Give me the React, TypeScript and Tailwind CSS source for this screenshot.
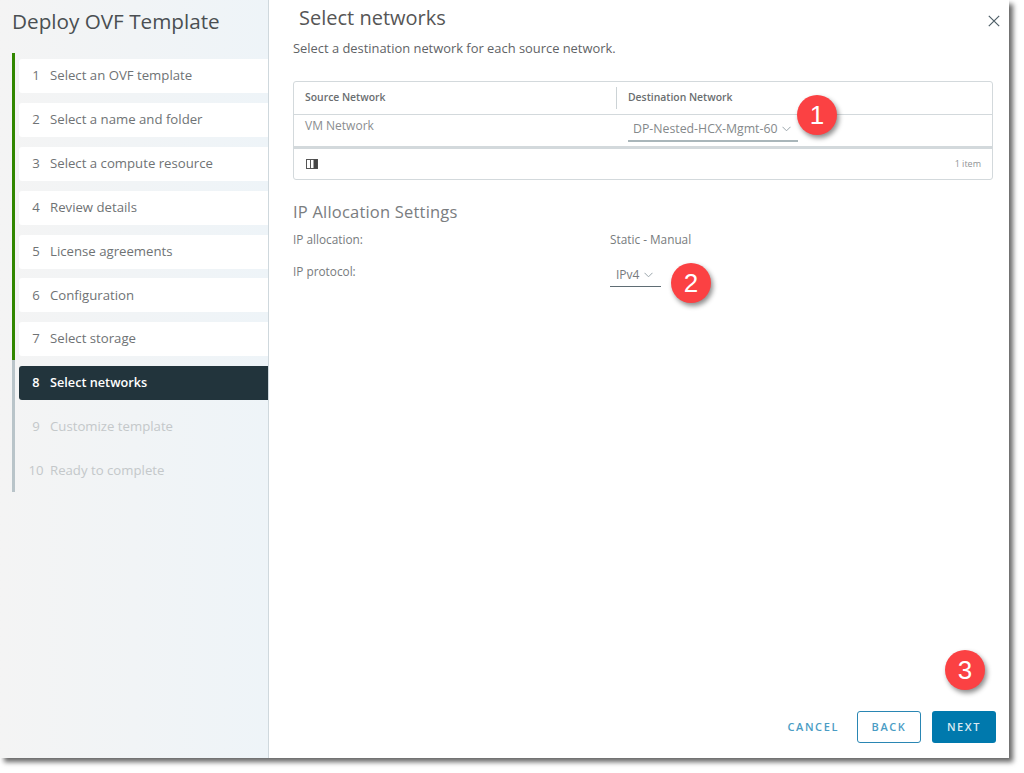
const steps = [
  { n: 1, label: "Select an OVF template", state: "done" },
  { n: 2, label: "Select a name and folder", state: "done" },
  { n: 3, label: "Select a compute resource", state: "done" },
  { n: 4, label: "Review details", state: "done" },
  { n: 5, label: "License agreements", state: "done" },
  { n: 6, label: "Configuration", state: "done" },
  { n: 7, label: "Select storage", state: "done" },
  { n: 8, label: "Select networks", state: "active" },
  { n: 9, label: "Customize template", state: "todo" },
  { n: 10, label: "Ready to complete", state: "todo" },
];

function Chevron() {
  return (
    <svg width="9" height="6" viewBox="0 0 9 6" fill="none" stroke="#9aa5ab" strokeWidth="1">
      <path d="M0.5 0.8 L4.5 4.8 L8.5 0.8" />
    </svg>
  );
}

function Badge({ n, className }: { n: number; className: string }) {
  return (
    <div
      className={
        "absolute w-10 h-10 rounded-full bg-[#fb4143] text-white text-[26px] flex items-center justify-center shadow-[2px_3px_5px_rgba(0,0,0,0.45)] font-['Liberation_Sans',sans-serif] " +
        className
      }
    >
      {n}
    </div>
  );
}

export default function App() {
  return (
    <div className="w-[1024px] h-[773px] bg-white overflow-hidden font-['Open_Sans',sans-serif]">
      <div className="relative flex w-[1009px] h-[758px] bg-white shadow-[4px_4px_5px_rgba(0,0,0,0.6)]">
        <aside className="w-[269px] h-full shrink-0 border-r border-[#cfd8dd] bg-gradient-to-r from-[#f4f4f4] to-[#eef4f8]">
          <h1 className="ml-3 mt-[7px] text-[20.7px] leading-7 text-[#4a4f52]">Deploy OVF Template</h1>
          <ol className="ml-3 mt-[18px] w-[256px]">
            {steps.map((s) => (
              <li
                key={s.n}
                className={
                  "border-l-[3px] pl-1 pt-[6px] pb-[3.9px] " +
                  (s.state === "done" ? "border-[#318700]" : "border-[#b9c4c9]")
                }
              >
                <div
                  className={
                    "flex items-center h-[34px] pl-[6px] rounded-l-[3px] " +
                    (s.state === "done"
                      ? "bg-white text-[#6f7375] text-[13.2px]"
                      : s.state === "active"
                        ? "bg-[#22343c] text-white font-semibold text-[12.7px] pb-[2px]"
                        : "text-[#c4c8ca] text-[13.2px]")
                  }
                >
                  <span className="w-[22px] text-center">{s.n}</span>
                  <span className="ml-[3px]">{s.label}</span>
                </div>
              </li>
            ))}
          </ol>
        </aside>

        <main className="flex-1 flex flex-col min-w-0 pl-6 pr-[13px] pb-[15px]">
          <div className="flex items-start justify-between">
            <h2 className="ml-[6px] mt-[4px] text-[20px] leading-7 text-[#565656]">Select networks</h2>
            <svg className="mt-[15px] -mr-[4px]" width="12" height="12" viewBox="0 0 12 12" stroke="#4f5f68" strokeWidth="1.2" fill="none">
              <path d="M0.8 0.8 L11.2 11.2 M11.2 0.8 L0.8 11.2" />
            </svg>
          </div>
          <p className="mt-[6px] text-[12.9px] leading-5 text-[#5f6366]">
            Select a destination network for each source network.
          </p>

          <div className="mt-[23px] w-[700px] border border-[#d3d9dc] rounded-[3px] text-[#6d7174]">
            <div className="flex h-[33px] items-center border-b border-[#d3d9dc] text-[10.4px] font-semibold text-[#6a6e70]">
              <div className="w-[323px] pl-[11px] h-[22px] flex items-center border-r border-[#ccd3d6]">Source Network</div>
              <div className="pl-[11px]">Destination Network</div>
            </div>
            <div className="flex h-[34px] border-b-[3px] border-[#d3d9dc]">
              <div className="w-[334px] pl-[11px] pt-[3px] leading-4 text-[12px] text-[#8a8d8f]">VM Network</div>
              <div className="flex h-[27px] w-[170px] items-center gap-[5px] border-b-2 border-[#a9b6ba] pl-[5px] pt-[3px] text-[12.3px] text-[#85898b]">
                DP-Nested-HCX-Mgmt-60
                <Chevron />
              </div>
            </div>
            <div className="flex h-[30px] items-center justify-between pl-[12px] pr-[11px]">
              <svg width="12" height="10" viewBox="0 0 12 10" fill="none">
                <rect x="0.5" y="0.5" width="11" height="9" stroke="#555" />
                <path d="M4.5 0.5 V9.5" stroke="#555" />
                <rect x="7.5" y="0.5" width="4" height="9" fill="#444" />
              </svg>
              <span className="text-[9px] text-[#8f9395]">1 item</span>
            </div>
          </div>

          <h3 className="mt-[22px] text-[16.5px] tracking-[0.2px] leading-5 text-[#7a7d7f]">IP Allocation Settings</h3>
          <div className="mt-[8px] flex h-[20px] items-center text-[11.8px] text-[#777b7d]">
            <div className="w-[317px]">IP allocation:</div>
            <div>Static - Manual</div>
          </div>
          <div className="mt-[13px] flex items-start text-[11.8px] text-[#777b7d]">
            <div className="w-[317px] leading-4">IP protocol:</div>
            <div className="flex h-[23px] w-[51px] items-center gap-[5px] border-b border-[#5f6d74] pl-[6px] mt-[1px] text-[12px]">
              IPv4
              <Chevron />
            </div>
          </div>

          <div className="mt-auto flex items-center justify-end gap-[18px] text-[11px] font-semibold tracking-[1.6px]">
            <button className="text-[#4a9cc4]">CANCEL</button>
            <button className="h-[32px] w-[64px] rounded-[3px] border border-[#2a86b3] text-[#4a9cc4]">BACK</button>
            <button className="h-[32px] w-[64px] rounded-[3px] bg-[#0079ad] text-[#dbeaf2] -ml-[7px]">NEXT</button>
          </div>

          <Badge n={1} className="left-[797px] top-[95px]" />
          <Badge n={2} className="left-[671px] top-[263px]" />
          <Badge n={3} className="left-[945px] top-[650px]" />
        </main>
      </div>
    </div>
  );
}
